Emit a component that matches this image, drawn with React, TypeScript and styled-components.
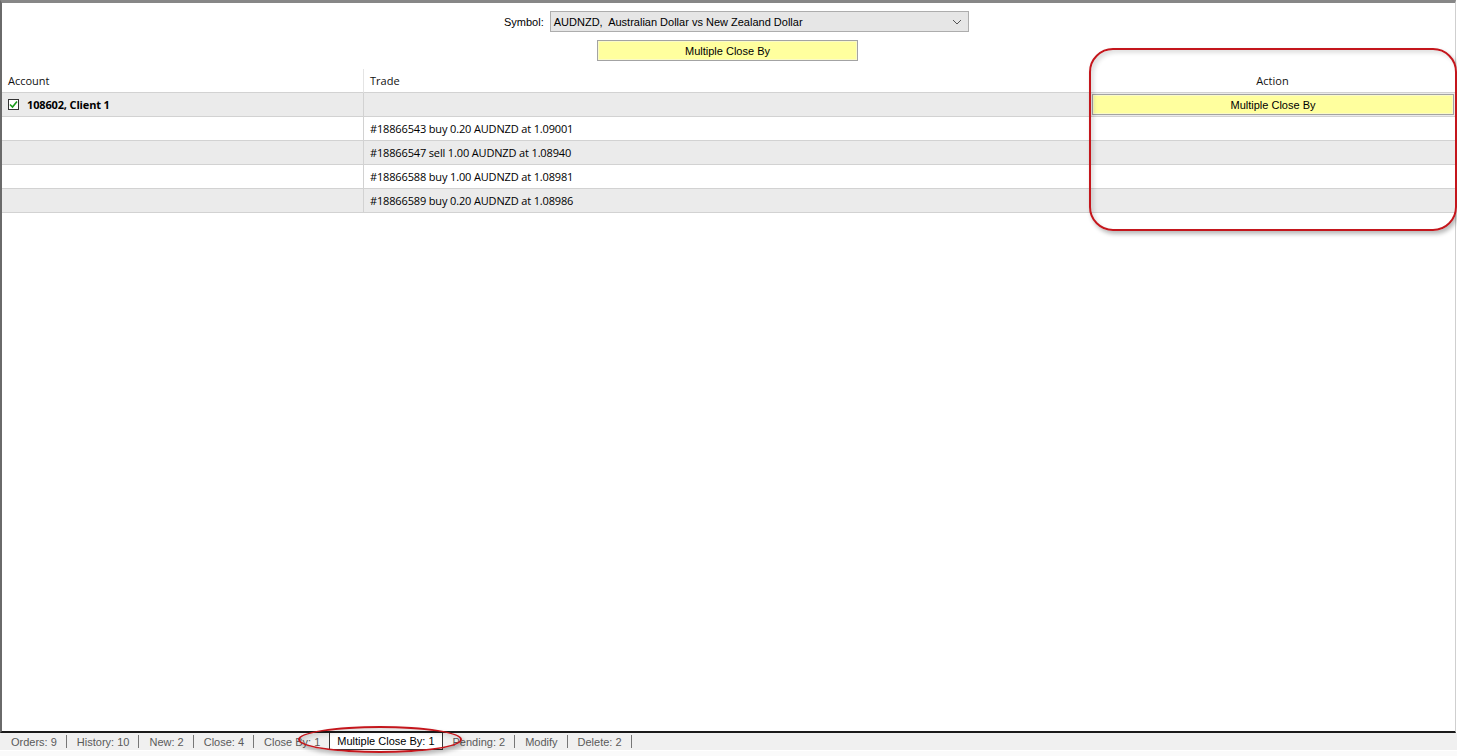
import React from "react";
import styled, { createGlobalStyle } from "styled-components";

const Global = createGlobalStyle`
  html, body { margin: 0; padding: 0; background: #fff; }
  body { font-family: "Liberation Sans", Arial, sans-serif; font-size: 12px; color: #000; }
  * { box-sizing: border-box; }
`;

const Page = styled.div`
  position: relative;
  width: 1457px;
  height: 756px;
  display: flex;
  flex-direction: column;
  background: #fff;
  overflow: hidden;
`;

const Frame = styled.div`
  flex: 0 0 733px;
  width: 1456px;
  border-top: 3px solid #878787;
  border-left: 2px solid #6a6a6a;
  border-right: 1px solid #cfcfcf;
  border-bottom: 2px solid #1a1a1a;
  display: flex;
  flex-direction: column;
  background: #fff;
`;

const Toolbar = styled.div`
  display: flex;
  flex-direction: column;
  gap: 8px;
  padding-top: 8px;
  padding-bottom: 8px;
`;

const SymbolRow = styled.div`
  display: flex;
  align-items: center;
  gap: 6px;
  padding-left: 502px;
`;

const Label = styled.span`
  font-size: 11px;
  color: #000;
`;

const Select = styled.div`
  width: 419px;
  height: 21px;
  background: #e6e6e6;
  border: 1px solid #adadad;
  display: flex;
  align-items: center;
  justify-content: space-between;
  padding: 0 6px 0 3px;
  font-size: 11px;
`;

const ButtonRow = styled.div`
  display: flex;
  padding-left: 595px;
`;

const YellowButton = styled.div<{ $w?: string }>`
  width: ${(p) => p.$w || "261px"};
  height: 21px;
  background: #ffff9e;
  border: 1px solid #a3a3a3;
  box-shadow: inset 0 0 0 1px #fafac8;
  display: flex;
  align-items: center;
  justify-content: center;
  font-size: 11px;
  color: #000;
`;

const Grid = styled.div`
  display: grid;
  grid-template-columns: 361px 727px 1fr;
`;

const HeaderCell = styled.div<{ $center?: boolean; $divider?: boolean }>`
  height: 24px;
  border-bottom: 1px solid #d2d2d2;
  border-left: ${(p) => (p.$divider ? "1px solid #e4e4e4" : "none")};
  display: flex;
  align-items: center;
  justify-content: ${(p) => (p.$center ? "center" : "flex-start")};
  padding: 0 6px;
  font-family: "Open Sans", "Liberation Sans", sans-serif;
  font-size: 11px;
  color: #111;
`;

const Cell = styled.div<{ $alt?: boolean; $divider?: boolean; $bold?: boolean }>`
  height: 24px;
  background: ${(p) => (p.$alt ? "#ebebeb" : "#fff")};
  border-bottom: 1px solid #d2d2d2;
  border-left: ${(p) => (p.$divider ? "1px solid #d2d2d2" : "none")};
  display: flex;
  align-items: center;
  gap: 8px;
  padding: 0 6px;
  font-family: "Open Sans", "Liberation Sans", sans-serif;
  font-size: 11px;
  font-weight: ${(p) => (p.$bold ? 700 : 400)};
  letter-spacing: -0.15px;
`;

const ActionCell = styled.div<{ $alt?: boolean }>`
  height: 24px;
  background: ${(p) => (p.$alt ? "#ebebeb" : "#fff")};
  border-bottom: 1px solid #d2d2d2;
  display: flex;
  align-items: center;
  padding: 0 1px 0 2px;
`;

const Check = styled.span`
  width: 11px;
  height: 11px;
  border: 1px solid #333;
  background: #fff;
  display: inline-flex;
  align-items: center;
  justify-content: center;
`;

const Spacer = styled.div`
  flex: 1;
`;

const TabBar = styled.div`
  height: 18px;
  background: #f0f0f0;
  display: flex;
  align-items: stretch;
  padding-left: 1px;
  border-bottom: 1px solid #fff;
`;

const Tab = styled.div<{ $active?: boolean }>`
  display: flex;
  align-items: center;
  padding: ${(p) => (p.$active ? "0 7px" : "0 9px 0 10px")};
  font-size: 11px;
  color: ${(p) => (p.$active ? "#000" : "#5a5a5a")};
  background: ${(p) => (p.$active ? "#fff" : "transparent")};
  border-left: ${(p) => (p.$active ? "1px solid #333" : "none")};
  border-right: ${(p) => (p.$active ? "1px solid #333" : "none")};
  border-bottom: ${(p) => (p.$active ? "1px solid #333" : "none")};
`;

const Sep = styled.span`
  width: 1px;
  height: 13px;
  align-self: center;
  background: #777;
`;

const Bottom = styled.div`
  flex: 1;
  background: #fafafa;
`;

const Annotation = styled.div<{ $x: number; $y: number; $w: number; $h: number; $ellipse?: boolean }>`
  position: absolute;
  left: ${(p) => p.$x}px;
  top: ${(p) => p.$y}px;
  width: ${(p) => p.$w}px;
  height: ${(p) => p.$h}px;
  border: 2px solid #c4161c;
  border-radius: ${(p) => (p.$ellipse ? "50%" : "24px")};
  box-shadow: 2px 3px 4px rgba(0, 0, 0, 0.28), inset 3px 3px 4px rgba(0, 0, 0, 0.12);
  pointer-events: none;
`;

const trades = [
  "#18866543 buy 0.20 AUDNZD at 1.09001",
  "#18866547 sell 1.00 AUDNZD at 1.08940",
  "#18866588 buy 1.00 AUDNZD at 1.08981",
  "#18866589 buy 0.20 AUDNZD at 1.08986",
];

const tabs = [
  "Orders: 9",
  "History: 10",
  "New: 2",
  "Close: 4",
  "Close By: 1",
  "Multiple Close By: 1",
  "Pending: 2",
  "Modify",
  "Delete: 2",
];

export default function App() {
  return (
    <Page>
      <Global />
      <Frame>
        <Toolbar>
          <SymbolRow>
            <Label>Symbol:</Label>
            <Select>
              <span>AUDNZD,&nbsp; Australian Dollar vs New Zealand Dollar</span>
              <svg width="10" height="6" viewBox="0 0 10 6">
                <path d="M1 1 L5 5 L9 1" fill="none" stroke="#555" strokeWidth="1" />
              </svg>
            </Select>
          </SymbolRow>
          <ButtonRow>
            <YellowButton>Multiple Close By</YellowButton>
          </ButtonRow>
        </Toolbar>
        <Grid>
          <HeaderCell>Account</HeaderCell>
          <HeaderCell $divider>Trade</HeaderCell>
          <HeaderCell $center>Action</HeaderCell>

          <Cell $alt $bold>
            <Check>
              <svg width="9" height="9" viewBox="0 0 9 9">
                <path d="M1 4.5 L3.5 7 L8 1.5" fill="none" stroke="#1a9a1a" strokeWidth="1.6" />
              </svg>
            </Check>
            108602, Client 1
          </Cell>
          <Cell $alt $divider />
          <ActionCell $alt>
            <YellowButton $w="100%">Multiple Close By</YellowButton>
          </ActionCell>

          {trades.map((t, i) => (
            <React.Fragment key={t}>
              <Cell $alt={i % 2 === 1} />
              <Cell $alt={i % 2 === 1} $divider>
                {t}
              </Cell>
              <ActionCell $alt={i % 2 === 1} />
            </React.Fragment>
          ))}
        </Grid>
        <Spacer />
      </Frame>
      <TabBar>
        {tabs.map((t, i) => {
          const active = t.startsWith("Multiple");
          const nextActive = tabs[i + 1]?.startsWith("Multiple");
          return (
            <React.Fragment key={t}>
              <Tab $active={active}>{t}</Tab>
              {!active && !nextActive && <Sep />}
            </React.Fragment>
          );
        })}
      </TabBar>
      <Bottom />
      <Annotation $x={1089} $y={48} $w={368} $h={183} />
      <Annotation $x={298} $y={726} $w={164} $h={27} $ellipse />
    </Page>
  );
}
